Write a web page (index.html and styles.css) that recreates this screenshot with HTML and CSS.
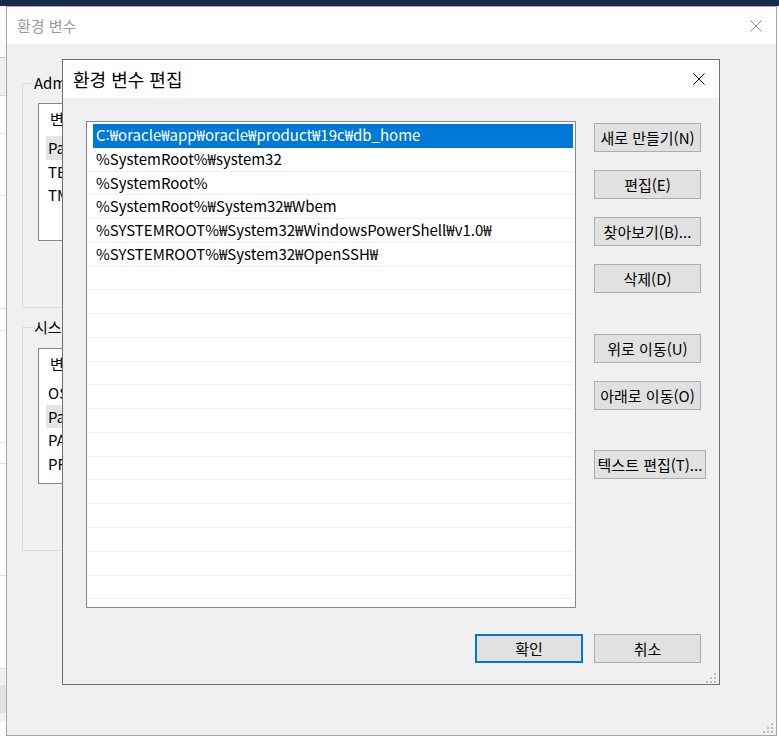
FILE: index.html
```html
<!DOCTYPE html>
<html lang="ko">
<head>
<meta charset="utf-8">
<title>환경 변수 편집</title>
<link rel="stylesheet" href="styles.css">
</head>
<body>
<div class="topbar"></div>
<div class="backstrip">
  <div class="bs bs-a"></div>
  <div class="bs bs-b"></div>
  <div class="bs bs-c"></div>
  <div class="bs bs-d"></div>
  <div class="bs bs-e"></div>
  <div class="bs bs-f"></div>
  <div class="bs bs-g"></div>
  <div class="bs bs-h"></div>
  <div class="bs bs-i"></div>
  <div class="bs bs-j"></div>
  <div class="bs bs-k"></div>
  <div class="bs bs-l"></div>
</div>

<div class="outer">
  <div class="outer-title">
    <span class="outer-title-text">환경 변수</span>
    <svg class="close" width="12" height="12" viewBox="0 0 12 12"><path d="M0.5 0.5L11.5 11.5M11.5 0.5L0.5 11.5" stroke="#8c8c8c" stroke-width="1" fill="none"/></svg>
  </div>
  <div class="outer-body">
    <div class="group g1">
      <span class="group-label">Admin</span>
      <div class="lv lv1">
        <div class="lv-head">변수</div>
        <div class="lv-row lv-sel">Path</div>
        <div class="lv-row">TEMP</div>
        <div class="lv-row">TMP</div>
      </div>
    </div>
    <div class="group g2">
      <span class="group-label">시스템</span>
      <div class="lv lv2">
        <div class="lv-head">변수</div>
        <div class="lv-row">OS</div>
        <div class="lv-row lv-sel">Path</div>
        <div class="lv-row">PATHEXT</div>
        <div class="lv-row">PROCESSOR_ARCHITECTURE</div>
      </div>
    </div>
  </div>
  <svg class="grip grip-outer" width="10" height="10" viewBox="0 0 10 10"><g fill="#bdbdbd"><rect x="8" y="0" width="2" height="2"/><rect x="4" y="4" width="2" height="2"/><rect x="8" y="4" width="2" height="2"/><rect x="0" y="8" width="2" height="2"/><rect x="4" y="8" width="2" height="2"/><rect x="8" y="8" width="2" height="2"/></g></svg>
</div>

<div class="dialog">
  <div class="dlg-title">
    <span>환경 변수 편집</span>
    <svg class="close" width="12" height="12" viewBox="0 0 12 12"><path d="M0.5 0.5L11.5 11.5M11.5 0.5L0.5 11.5" stroke="#000" stroke-width="1" fill="none"/></svg>
  </div>
  <div class="dlg-body">
    <div class="dlg-main">
      <div class="pathlist">
        <div class="prow psel">C:₩oracle₩app₩oracle₩product₩19c₩db_home</div>
        <div class="prow">%SystemRoot%₩system32</div>
        <div class="prow">%SystemRoot%</div>
        <div class="prow">%SystemRoot%₩System32₩Wbem</div>
        <div class="prow">%SYSTEMROOT%₩System32₩WindowsPowerShell₩v1.0₩</div>
        <div class="prow">%SYSTEMROOT%₩System32₩OpenSSH₩</div>
        <div class="prow"></div>
        <div class="prow"></div>
        <div class="prow"></div>
        <div class="prow"></div>
        <div class="prow"></div>
        <div class="prow"></div>
        <div class="prow"></div>
        <div class="prow"></div>
        <div class="prow"></div>
        <div class="prow"></div>
        <div class="prow"></div>
        <div class="prow"></div>
        <div class="prow"></div>
        <div class="prow"></div>
        <div class="prow"></div>
      </div>
      <div class="side">
        <button class="btn">새로 만들기(N)</button>
        <button class="btn">편집(E)</button>
        <button class="btn">찾아보기(B)...</button>
        <button class="btn">삭제(D)</button>
        <button class="btn gap-l">위로 이동(U)</button>
        <button class="btn">아래로 이동(O)</button>
        <button class="btn btn-wide gap-xl">텍스트 편집(T)...</button>
      </div>
    </div>
    <div class="dlg-foot">
      <button class="btn btn-ok">확인</button>
      <button class="btn">취소</button>
    </div>
  </div>
  <svg class="grip grip-dlg" width="10" height="10" viewBox="0 0 10 10"><g fill="#bdbdbd"><rect x="8" y="0" width="2" height="2"/><rect x="4" y="4" width="2" height="2"/><rect x="8" y="4" width="2" height="2"/><rect x="0" y="8" width="2" height="2"/><rect x="4" y="8" width="2" height="2"/><rect x="8" y="8" width="2" height="2"/></g></svg>
</div>
</body>
</html>
```

FILE: styles.css
```css
html, body {
  margin: 0;
  padding: 0;
}
body {
  width: 779px;
  height: 740px;
  overflow: hidden;
  position: relative;
  background: #ffffff;
  font-family: "Noto Sans CJK KR", "Noto Sans", sans-serif;
  color: #000;
}

/* desktop pieces behind */
.topbar {
  position: absolute;
  left: 0;
  top: 0;
  width: 779px;
  height: 6px;
  background: #1b2a48;
}
.backstrip {
  position: absolute;
  left: 0;
  top: 6px;
  width: 6px;
  height: 734px;
  display: flex;
  flex-direction: column;
}
.bs { flex: none; box-sizing: border-box; }
.bs-a { height: 52px; background: #fafafa; border-bottom: 1px solid #c8c8c8; }
.bs-b { height: 38px; background: #f0f0f0; border-bottom: 1px solid #dadada; }
.bs-c { height: 38px; background: #fff; border-bottom: 1px solid #e3e3e3; }
.bs-d { height: 62px; background: #fff; border-bottom: 1px solid #e3e3e3; }
.bs-e { height: 113px; background: #fff; border-bottom: 1px solid #dcdcdc; }
.bs-f { height: 22px; background: #fff; border-bottom: 1px solid #e3e3e3; }
.bs-g { height: 112px; background: #fff; border-bottom: 1px solid #e3e3e3; }
.bs-h { height: 21px; background: #fff; border-bottom: 1px solid #e3e3e3; }
.bs-i { height: 112px; background: #fff; border-bottom: 1px solid #e0e0e0; }
.bs-j { height: 93px; background: #fff; border-bottom: 1px solid #e0e0e0; }
.bs-k { height: 44px; background: #e1e1e1; border-top: 16px solid #f0f0f0; }
.bs-l { height: 28px; background: #fff; border-top: 8px solid #f0f0f0; border-bottom: 1px solid #aaa; }

/* outer window */
.outer {
  position: absolute;
  left: 6px;
  top: 6px;
  width: 771px;
  height: 730px;
  box-sizing: border-box;
  border: 1px solid #a6a6a6;
  background: #f0f0f0;
  display: flex;
  flex-direction: column;
}
.outer-title {
  flex: none;
  height: 37px;
  background: #fff;
  display: flex;
  align-items: center;
  justify-content: space-between;
  padding: 0 14px 0 10px;
}
.outer-title-text {
  font-size: 15px;
  color: #9b9b9b;
}
.outer-body {
  padding: 39px 0 0 15px;
}
.group {
  position: relative;
  box-sizing: border-box;
  width: 690px;
  border: 1px solid #dcdcdc;
}
.g1 { height: 225px; padding: 19px 0 0 15px; }
.g2 { height: 224px; padding: 20px 0 0 15px; margin-top: 19px; }
.group-label {
  position: absolute;
  top: -11px;
  left: 10px;
  padding: 0 1px;
  background: #f0f0f0;
  font-size: 15px;
  line-height: 20px;
  white-space: nowrap;
}
.lv {
  box-sizing: border-box;
  width: 660px;
  border: 1px solid #828790;
  background: #fff;
  font-size: 15px;
  overflow: hidden;
}
.lv1 { height: 138px; }
.lv2 { height: 136px; }
.lv-head {
  height: 32px;
  line-height: 30px;
  padding-left: 11px;
}
.lv-row {
  height: 23.5px;
  line-height: 23.5px;
  margin-left: 7px;
  padding-left: 2px;
}
.lv-sel { background: #e5e5e5; }

/* dialog */
.dialog {
  position: absolute;
  left: 62px;
  top: 59px;
  width: 658px;
  height: 626px;
  box-sizing: border-box;
  border: 1px solid #6f6f6f;
  background: #f0f0f0;
  display: flex;
  flex-direction: column;
}
.dlg-title {
  flex: none;
  height: 38px;
  background: #fff;
  display: flex;
  align-items: center;
  justify-content: space-between;
  padding: 0 14px 0 10px;
  font-size: 18px;
}
.dlg-body {
  flex: 1;
  display: flex;
  flex-direction: column;
  padding: 23px 18px 21px 23px;
}
.dlg-main {
  display: flex;
  gap: 18px;
  height: 487px;
}
.pathlist {
  flex: none;
  box-sizing: border-box;
  width: 490px;
  height: 487px;
  border: 1px solid #828790;
  background: #fff;
  padding: 2px 1px 0;
  overflow: hidden;
}
.prow {
  box-sizing: border-box;
  height: 23.78px;
  line-height: 22.78px;
  padding-left: 8px;
  border-bottom: 1px solid #efefef;
  font-size: 15px;
  white-space: nowrap;
}
.psel {
  margin: 0 1px 0 5px;
  padding-left: 3px;
  background: #0078d7;
  color: #fff;
  border-bottom-color: #0078d7;
}
.side {
  display: flex;
  flex-direction: column;
  align-items: flex-start;
  gap: 18px;
  padding-top: 2px;
}
.btn {
  box-sizing: border-box;
  width: 107px;
  height: 29px;
  padding: 0;
  border: 1px solid #adadad;
  background: #e1e1e1;
  color: #000;
  font-family: "Noto Sans CJK KR", "Noto Sans", sans-serif;
  font-size: 15px;
  line-height: 27px;
  white-space: nowrap;
  text-align: center;
}
.btn-wide { width: 112px; }
.gap-l { margin-top: 23px; }
.gap-xl { margin-top: 22px; }
.dlg-foot {
  display: flex;
  justify-content: flex-end;
  gap: 11px;
  margin-top: 26px;
}
.btn-ok {
  width: 108px;
  border: 2px solid #0078d7;
  line-height: 25px;
}
.grip {
  position: absolute;
}
.grip-dlg { right: 3px; bottom: 1px; }
.grip-outer { right: 3px; bottom: 2px; }
```
